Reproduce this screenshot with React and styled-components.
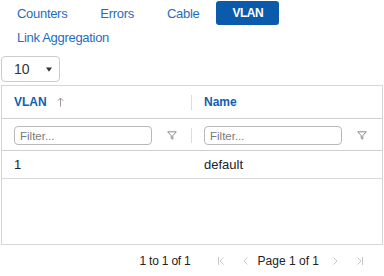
import React from "react";
import styled, { createGlobalStyle } from "styled-components";

const GlobalStyle = createGlobalStyle`
  body {
    margin: 0;
    background: #fff;
    font-family: "Liberation Sans", Arial, sans-serif;
  }
`;

const Page = styled.div`
  width: 384px;
  height: 276px;
  overflow: hidden;
`;

const Tabs = styled.div`
  display: flex;
  flex-wrap: wrap;
  width: 300px;
  padding: 1px 0 0 1px;
`;

const Tab = styled.a`
  display: flex;
  align-items: center;
  height: 24px;
  padding: 0 16px;
  margin-right: 1px;
  border-radius: 3px;
  font-size: 13px;
  letter-spacing: -0.3px;
  color: ${(p) => (p.$active ? "#fff" : "#1f6dbd")};
  background: ${(p) => (p.$active ? "#0b5aab" : "transparent")};
  font-weight: ${(p) => (p.$active ? "bold" : "normal")};
  text-decoration: none;
  cursor: pointer;
`;

const ActiveLabel = styled.span`
  font-size: 12px;
  letter-spacing: -0.5px;
`;

const SelectBox = styled.div`
  display: flex;
  align-items: center;
  justify-content: space-between;
  box-sizing: border-box;
  width: 59px;
  height: 26px;
  margin: 7px 0 0 1px;
  padding: 0 7px 0 12px;
  border: 1px solid #ccc;
  border-radius: 4px;
  font-size: 14px;
  color: #333;
`;

const Grid = styled.div`
  box-sizing: border-box;
  display: flex;
  flex-direction: column;
  margin: 3px 1px 0 1px;
  height: 160px;
  border: 1px solid #d6d6d6;
`;

const Row = styled.div`
  display: grid;
  grid-template-columns: 190px 1fr;
  box-sizing: border-box;
  height: ${(p) => p.$height}px;
  border-bottom: 1px solid ${(p) => p.$line || "#d9d9d9"};
`;

const HeaderCell = styled.div`
  position: relative;
  display: flex;
  align-items: center;
  gap: 10px;
  padding: 0 12px;
  font-size: 12px;
  font-weight: bold;
  color: #0f60b2;

  ${(p) =>
    p.$sep &&
    `&::after {
      content: "";
      position: absolute;
      right: 0;
      top: 50%;
      height: 15px;
      margin-top: -7px;
      border-right: 1px solid #dcdcdc;
    }`}
`;

const FilterCell = styled(HeaderCell)`
  gap: 0;
  padding: 0 0 0 12px;
  font-weight: normal;
`;

const FilterInput = styled.input`
  box-sizing: border-box;
  width: 138px;
  height: 19px;
  margin-top: 2px;
  padding: 0 5px;
  border: 1px solid #b9b9b9;
  border-radius: 4px;
  font-family: "Liberation Sans", Arial, sans-serif;
  font-size: 11.5px;
  color: #333;
  outline: none;

  &::placeholder {
    color: #7a7a7a;
  }
`;

const FilterIcon = styled.svg`
  width: 10px;
  height: 9px;
  margin: 2px 0 0 15px;
`;

const Cell = styled.div`
  display: flex;
  align-items: center;
  padding: 0 12px;
  font-size: 13px;
  color: #222;
`;

const Paging = styled.div`
  display: flex;
  align-items: center;
  justify-content: flex-end;
  height: 32px;
  padding-right: 16px;
  font-size: 12px;
  color: #222;
`;

const Summary = styled.span`
  letter-spacing: -0.2px;
  margin-right: 22px;
`;

const PageButton = styled.span`
  display: flex;
  align-items: center;
  justify-content: center;
  width: 16px;
  height: 16px;
  margin-left: ${(p) => p.$ml || 0}px;
`;

const PageText = styled.span`
  margin: 0 8px 0 4px;
`;

const Funnel = () => (
  <FilterIcon viewBox="0 0 10 9">
    <path d="M0.7 0.8 H9.3 L5.8 4.6 V8.2 L4.2 7.2 V4.6 Z" fill="none" stroke="#8a8a8a" strokeWidth="1" strokeLinejoin="round" />
  </FilterIcon>
);

const SortUp = () => (
  <svg width="7" height="10" viewBox="0 0 7 10">
    <path d="M3.5 1 V9.5 M0.8 3.8 L3.5 1 L6.2 3.8" fill="none" stroke="#9a9a9a" strokeWidth="1" />
  </svg>
);

const Caret = () => (
  <svg width="6" height="5" viewBox="0 0 6 5">
    <path d="M0 0.5 H6 L3 4.8 Z" fill="#333" />
  </svg>
);

const PageIcon = ({ d }) => (
  <svg width="10" height="10" viewBox="0 0 10 10">
    <path d={d} fill="none" stroke="#c9c9c9" strokeWidth="1" />
  </svg>
);

const tabs = ["Counters", "Errors", "Cable", "VLAN", "Link Aggregation"];

export default function App() {
  return (
    <Page>
      <GlobalStyle />
      <Tabs>
        {tabs.map((t) =>
          t === "VLAN" ? (
            <Tab key={t} $active>
              <ActiveLabel>{t}</ActiveLabel>
            </Tab>
          ) : (
            <Tab key={t}>{t}</Tab>
          )
        )}
      </Tabs>
      <SelectBox>
        <span>10</span>
        <Caret />
      </SelectBox>
      <Grid>
        <Row $height={33} $line="#cfcfcf">
          <HeaderCell $sep>
            VLAN
            <SortUp />
          </HeaderCell>
          <HeaderCell>Name</HeaderCell>
        </Row>
        <Row $height={32} $line="#cfcfcf">
          <FilterCell $sep>
            <FilterInput placeholder="Filter..." />
            <Funnel />
          </FilterCell>
          <FilterCell>
            <FilterInput placeholder="Filter..." />
            <Funnel />
          </FilterCell>
        </Row>
        <Row $height={28}>
          <Cell>1</Cell>
          <Cell>default</Cell>
        </Row>
      </Grid>
      <Paging>
        <Summary>1 to 1 of 1</Summary>
        <PageButton>
          <PageIcon d="M2.5 1 V9 M7.5 1.5 L4 5 L7.5 8.5" />
        </PageButton>
        <PageButton $ml={9}>
          <PageIcon d="M6.5 1.5 L3 5 L6.5 8.5" />
        </PageButton>
        <PageText>Page 1 of 1</PageText>
        <PageButton>
          <PageIcon d="M3.5 1.5 L7 5 L3.5 8.5" />
        </PageButton>
        <PageButton $ml={9}>
          <PageIcon d="M2.5 1.5 L6 5 L2.5 8.5 M7.5 1 V9" />
        </PageButton>
      </Paging>
    </Page>
  );
}
